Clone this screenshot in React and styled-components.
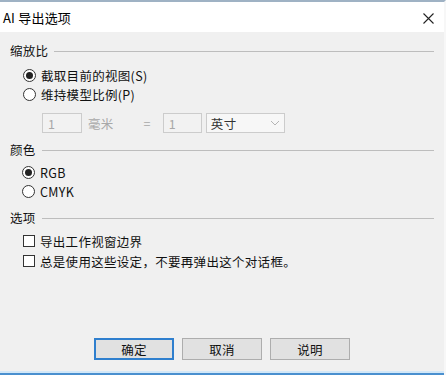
import React from "react";
import styled, { createGlobalStyle } from "styled-components";

const Global = createGlobalStyle`
  html, body { margin: 0; padding: 0; background: #f0f0f0; overflow: hidden; }
  * { box-sizing: border-box; }
  body { font-family: "Noto Sans CJK SC", "Liberation Sans", sans-serif; }
`;

const Dialog = styled.div`
  width: 446px;
  height: 375px;
  display: flex;
  flex-direction: column;
  background: #f0f0f0;
  border-top: 2px solid #9fb2c4;
  border-right: 2px solid #f7f7f7;
  color: #111;
  font-size: 12.5px;
  letter-spacing: 0.3px;
`;

const TitleBar = styled.div`
  height: 30px;
  background: #ffffff;
  display: flex;
  align-items: center;
  justify-content: space-between;
  padding: 0 8px 0 3px;
  font-size: 13px;
  letter-spacing: 0.2px;
  color: #000;
`;

const CloseBtn = styled.div`
  width: 16px;
  height: 16px;
  display: flex;
  align-items: center;
  justify-content: center;
  margin-top: 2px;
`;

const Content = styled.div`
  flex: 1;
  padding: 10px 10px 0 10px;
  display: flex;
  flex-direction: column;
`;

const GroupHeader = styled.div`
  height: 18px;
  display: flex;
  align-items: center;
  gap: 6px;
  margin-top: ${(p) => p.$mt || 0}px;
  line-height: 18px;
  &::after {
    content: "";
    flex: 1;
    height: 1px;
    background: #bdbdbd;
  }
`;

const Options = styled.div`
  display: flex;
  flex-direction: column;
  padding-left: ${(p) => p.$indent}px;
  margin-top: ${(p) => p.$mt}px;
`;

const OptionRow = styled.div`
  height: ${(p) => p.$h || 19}px;
  display: flex;
  align-items: center;
  gap: 5px;
  white-space: nowrap;
`;

const Radio = styled.span`
  width: 13px;
  height: 13px;
  border-radius: 50%;
  border: 1px solid #333;
  background: #fff;
  display: inline-flex;
  align-items: center;
  justify-content: center;
  flex-shrink: 0;
  &::after {
    content: "";
    width: 7px;
    height: 7px;
    border-radius: 50%;
    background: ${(p) => (p.$checked ? "#222" : "transparent")};
  }
`;

const Check = styled.span`
  width: 12px;
  height: 12px;
  border: 1px solid #333;
  background: #fff;
  flex-shrink: 0;
`;

const ScaleRow = styled.div`
  height: 20px;
  margin-top: 9px;
  margin-left: 32px;
  display: flex;
  align-items: center;
`;

const Field = styled.div`
  width: ${(p) => p.$w}px;
  height: 20px;
  border: 1px solid #cccccc;
  background: #f2f2f2;
  color: #a8a8a8;
  padding-left: 5px;
  display: flex;
  align-items: center;
  margin-left: ${(p) => p.$ml || 0}px;
`;

const Muted = styled.span`
  color: #a8a8a8;
  margin-left: ${(p) => p.$ml}px;
`;

const Select = styled.div`
  width: 79px;
  height: 20px;
  margin-left: 4px;
  border: 1px solid #cccccc;
  background: #f7f7f7;
  display: flex;
  align-items: center;
  justify-content: space-between;
  padding: 0 4px 0 4px;
  color: #333;
`;

const Footer = styled.div`
  display: flex;
  justify-content: center;
  gap: 8px;
  padding-bottom: 11px;
  border-bottom: 2px solid #d3e8f8;
`;

const BottomEdge = styled.div`
  height: 2px;
  background: #4a90cf;
`;

const Button = styled.div`
  width: 80px;
  height: 22px;
  display: flex;
  align-items: center;
  justify-content: center;
  background: #e1e1e1;
  border: ${(p) => (p.$default ? "2px solid #2f7fce" : "1px solid #adadad")};
  color: #111;
  font-size: 12.5px;
`;

export default function App() {
  return (
    <>
      <Global />
      <Dialog>
        <TitleBar>
          <span>AI 导出选项</span>
          <CloseBtn>
            <svg width="11" height="11" viewBox="0 0 11 11">
              <path d="M0.5 0.5 L10.5 10.5 M10.5 0.5 L0.5 10.5" stroke="#222" strokeWidth="1.1" />
            </svg>
          </CloseBtn>
        </TitleBar>
        <Content>
          <GroupHeader>缩放比</GroupHeader>
          <Options $indent={13} $mt={6}>
            <OptionRow>
              <Radio $checked />
              <span>截取目前的视图(S)</span>
            </OptionRow>
            <OptionRow>
              <Radio />
              <span>维持模型比例(P)</span>
            </OptionRow>
          </Options>
          <ScaleRow>
            <Field $w={40}>1</Field>
            <Muted $ml={6}>毫米</Muted>
            <Muted $ml={30}>=</Muted>
            <Field $w={39} $ml={12}>1</Field>
            <Select>
              <span>英寸</span>
              <svg width="10" height="6" viewBox="0 0 10 6">
                <path d="M1 1 L5 5 L9 1" stroke="#b5b5b5" fill="none" strokeWidth="1" />
              </svg>
            </Select>
          </ScaleRow>
          <GroupHeader $mt={8}>颜色</GroupHeader>
          <Options $indent={12} $mt={4}>
            <OptionRow>
              <Radio $checked />
              <span>RGB</span>
            </OptionRow>
            <OptionRow>
              <Radio />
              <span>CMYK</span>
            </OptionRow>
          </Options>
          <GroupHeader $mt={8}>选项</GroupHeader>
          <Options $indent={13} $mt={4}>
            <OptionRow $h={20}>
              <Check />
              <span>导出工作视窗边界</span>
            </OptionRow>
            <OptionRow $h={20}>
              <Check />
              <span>总是使用这些设定，不要再弹出这个对话框。</span>
            </OptionRow>
          </Options>
        </Content>
        <Footer>
          <Button $default>确定</Button>
          <Button>取消</Button>
          <Button>说明</Button>
        </Footer>
        <BottomEdge />
      </Dialog>
    </>
  );
}
